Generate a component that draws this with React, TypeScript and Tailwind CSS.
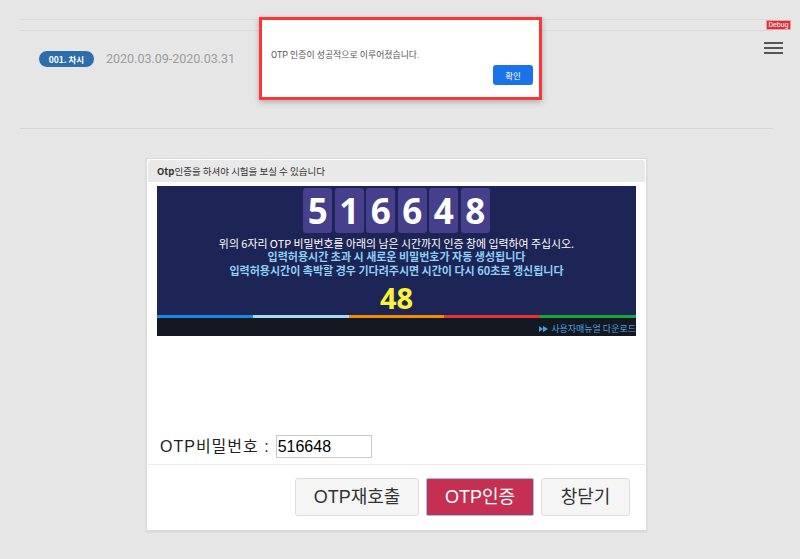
import React from 'react';

const digits = ['5', '1', '6', '6', '4', '8'];
const stripColors = ['bg-[#1a87e0]', 'bg-[#a8dcf6]', 'bg-[#f08d05]', 'bg-[#e8323a]', 'bg-[#16a83c]'];

const App: React.FC = () => {
    return (
        <div className="relative min-h-[559px] overflow-hidden bg-[#e6e6e6] font-['Liberation_Sans','Noto_Sans_CJK_KR',sans-serif]">
            <div className="mx-[20px] mt-[19px] w-[753px]">
                <div className="h-[11px] border-t border-[#dadada]" />
                {/* header */}
                <div className="flex h-[98px] items-start gap-[11px] border-t border-[#d9d9d9] pl-[18px] pt-[19px]">
                    <span className="flex h-[18px] w-[57px] items-center justify-center rounded-full border border-[#eaeaea] bg-[#2e6dab] font-['Noto_Sans_CJK_KR',sans-serif] text-[8.5px] font-bold text-white">
                        001. 차시
                    </span>
                    <span className="font-['Roboto',sans-serif] text-[12.5px] leading-[18px] text-[#9c9c9c]">2020.03.09-2020.03.31</span>
                </div>
                <div className="border-t border-[#d5d5d5] pt-[29px]">
                    <div className="mx-auto w-[501px] border border-[#dadada] bg-white shadow-[0_1px_2px_rgba(0,0,0,0.08)]">
                        <div className="mx-[1px] mt-[1px] flex h-[22px] items-center rounded-t-[3px] bg-[#e9e9e9] pl-[9px] font-['Noto_Sans_CJK_KR',sans-serif] text-[9.5px] text-[#333]">
                            <b>Otp</b>인증을 하셔야 시험을 보실 수 있습니다
                        </div>
                        {/* otp banner */}
                        <div className="mx-[10px] mt-[4px] flex h-[150px] flex-col bg-[#1c2556]">
                            <div className="mt-[2px] flex h-[45px] justify-center gap-[2.5px]">
                                {digits.map((d, i) => (
                                    <div key={i} className="flex w-[29px] items-center justify-center rounded-[3px] bg-[#463f8b] font-['Open_Sans',sans-serif] text-[35px] font-bold leading-none text-white">
                                        {d}
                                    </div>
                                ))}
                            </div>
                            <div className="mt-[3.5px] text-center font-['Noto_Sans_CJK_KR',sans-serif] leading-[13.5px]">
                                <p className="text-[10.9px] text-white">위의 6자리 OTP 비밀번호를 아래의 남은 시간까지 인증 창에 입력하여 주십시오.</p>
                                <p className="text-[11px] font-bold text-[#8fd0f4]">입력허용시간 초과 시 새로운 비밀번호가 자동 생성됩니다</p>
                                <p className="text-[11px] font-bold text-[#8fd0f4]">입력허용시간이 촉박할 경우 기다려주시면 시간이 다시 60초로 갱신됩니다</p>
                            </div>
                            <div className="mt-[6px] h-[30px] text-center font-['Open_Sans',sans-serif] text-[29px] font-bold leading-[30px] text-[#fff23c]">48</div>
                            <div className="mt-[2px] flex h-[3px]">
                                {stripColors.map((c) => (
                                    <div key={c} className={`flex-1 ${c}`} />
                                ))}
                            </div>
                            <div className="flex h-[18px] items-end justify-end overflow-hidden bg-[#141821] pb-[1px]">
                                <span className="flex items-center gap-[3px] whitespace-nowrap font-['Noto_Sans_CJK_KR',sans-serif] text-[9px] leading-[12px] text-[#4c9fe0]">
                                    <svg width="9" height="6" viewBox="0 0 9 6" fill="#4c9fe0">
                                        <path d="M0 0l4 3-4 3z" />
                                        <path d="M4 0l5 3-5 3z" />
                                    </svg>
                                    사용자매뉴얼 다운로드
                                </span>
                            </div>
                        </div>
                        {/* input row */}
                        <div className="mt-[99px] flex h-[23px] items-center pl-[13px] text-[16px] text-[#222]">
                            <span className="tracking-[1px]">OTP비밀번호 :</span>
                            <input
                                readOnly
                                value="516648"
                                className="ml-[6px] h-[23px] w-[96px] border border-[#c9c9c9] px-[1px] text-[16px] text-black outline-none"
                            />
                        </div>
                        <div className="mx-[1px] mt-[6px] border-t border-[#ececec]" />
                        <div className="flex justify-end gap-[7px] pb-[14px] pr-[16px] pt-[13px] text-[18px]">
                            <button className="h-[38px] w-[124px] rounded-[3px] border border-[#dcdcdc] bg-[#f5f5f5] text-[#333]">OTP재호출</button>
                            <button className="h-[38px] w-[108px] rounded-[2px] border border-[#9cc3ea] bg-[#c42f52] text-white">OTP인증</button>
                            <button className="h-[38px] w-[89px] rounded-[3px] border border-[#dcdcdc] bg-[#f5f5f5] text-[#333]">창닫기</button>
                        </div>
                    </div>
                </div>
            </div>

            {/* debug badge */}
            <div className="absolute left-[766px] top-[20px] flex h-[10px] w-[25px] items-center justify-center border border-[#f0a0a0] bg-[#d8303a] font-['Roboto',sans-serif] text-[7px] leading-none text-white">
                Debug
            </div>

            {/* menu */}
            <div className="absolute left-[764px] top-[42px] flex w-[19px] flex-col gap-[3px]">
                <span className="h-[2px] bg-[#555]" />
                <span className="h-[2px] bg-[#555]" />
                <span className="h-[2px] bg-[#555]" />
            </div>

            {/* alert */}
            <div className="absolute left-[259px] top-[17px] h-[83px] w-[283px] border-[3px] border-[#ff3535] bg-white shadow-[0_2px_6px_rgba(0,0,0,0.25)]">
                <p className="ml-[9px] mt-[29px] font-['Roboto','Noto_Sans_CJK_KR',sans-serif] text-[8.9px] leading-[12px] text-[#555]">
                    OTP 인증이 성공적으로 이루어졌습니다.
                </p>
                <div className="mt-[4px] flex justify-end pr-[6px]">
                    <button className="h-[20px] w-[40px] rounded-[3px] bg-[#1a73e8] font-['Noto_Sans_CJK_KR',sans-serif] text-[8.5px] text-white">확인</button>
                </div>
            </div>
        </div>
    );
};

export default App;
